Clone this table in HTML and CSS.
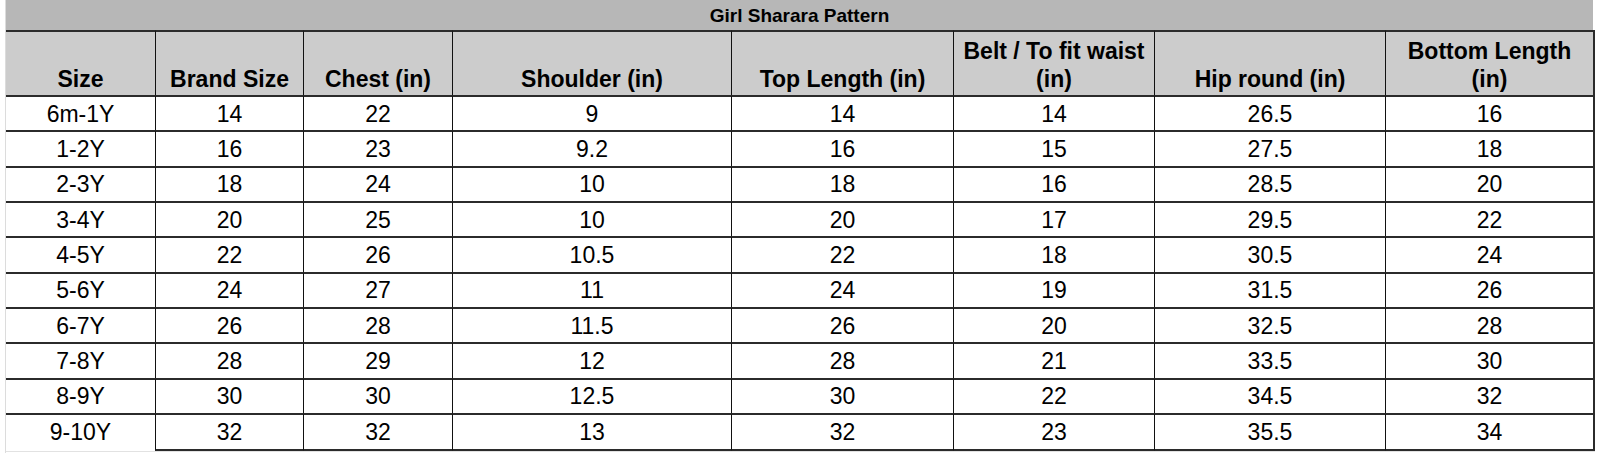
FILE: index.html
```html
<!DOCTYPE html>
<html>
<head>
<meta charset="utf-8">
<link rel="stylesheet" href="styles.css">
</head>
<body>
<div class="sheet">
  <div class="grid">
    <div class="title">Girl Sharara Pattern</div>

    <div class="h first"><span>Size</span></div>
    <div class="h"><span>Brand Size</span></div>
    <div class="h"><span>Chest (in)</span></div>
    <div class="h"><span>Shoulder (in)</span></div>
    <div class="h"><span>Top Length (in)</span></div>
    <div class="h"><span>Belt / To fit waist (in)</span></div>
    <div class="h"><span>Hip round (in)</span></div>
    <div class="h last"><span>Bottom Length (in)</span></div>

    <div class="c first">6m-1Y</div><div class="c">14</div><div class="c">22</div><div class="c">9</div><div class="c">14</div><div class="c">14</div><div class="c">26.5</div><div class="c last">16</div>
    <div class="c first">1-2Y</div><div class="c">16</div><div class="c">23</div><div class="c">9.2</div><div class="c">16</div><div class="c">15</div><div class="c">27.5</div><div class="c last">18</div>
    <div class="c first">2-3Y</div><div class="c">18</div><div class="c">24</div><div class="c">10</div><div class="c">18</div><div class="c">16</div><div class="c">28.5</div><div class="c last">20</div>
    <div class="c first">3-4Y</div><div class="c">20</div><div class="c">25</div><div class="c">10</div><div class="c">20</div><div class="c">17</div><div class="c">29.5</div><div class="c last">22</div>
    <div class="c first">4-5Y</div><div class="c">22</div><div class="c">26</div><div class="c">10.5</div><div class="c">22</div><div class="c">18</div><div class="c">30.5</div><div class="c last">24</div>
    <div class="c first">5-6Y</div><div class="c">24</div><div class="c">27</div><div class="c">11</div><div class="c">24</div><div class="c">19</div><div class="c">31.5</div><div class="c last">26</div>
    <div class="c first">6-7Y</div><div class="c">26</div><div class="c">28</div><div class="c">11.5</div><div class="c">26</div><div class="c">20</div><div class="c">32.5</div><div class="c last">28</div>
    <div class="c first">7-8Y</div><div class="c">28</div><div class="c">29</div><div class="c">12</div><div class="c">28</div><div class="c">21</div><div class="c">33.5</div><div class="c last">30</div>
    <div class="c first">8-9Y</div><div class="c">30</div><div class="c">30</div><div class="c">12.5</div><div class="c">30</div><div class="c">22</div><div class="c">34.5</div><div class="c last">32</div>
    <div class="c first end">9-10Y</div><div class="c end">32</div><div class="c end">32</div><div class="c end">13</div><div class="c end">32</div><div class="c end">23</div><div class="c end">35.5</div><div class="c last end">34</div>
  </div>
</div>
</body>
</html>
```
FILE: styles.css
```css
* { box-sizing: border-box; }
html, body { margin: 0; padding: 0; background: #fff; }
body { font-family: "Liberation Sans", Arial, sans-serif; color: #000; }

.sheet {
  margin-left: 5px;
  border-left: 1px solid #dcdcdc;
  height: 453px;
}

.grid {
  display: grid;
  grid-template-columns: 149px 148px 149px 279px 222px 201px 231px 210px;
  grid-template-rows: 30px 65px repeat(9, 35.33px) 38.33px;
  width: 1589px;
  border-bottom: 1px solid #e2e2e2;
}

.title {
  grid-column: 1 / -1;
  background: #b7b7b7;
  font-weight: bold;
  font-size: 19px;
  text-align: center;
  line-height: 30px;
  padding-top: 1px;
  margin-right: 2px;
}

.h {
  background: #cccccc;
  border-top: 2px solid #2b2b2b;
  border-left: 1px solid #111;
  font-weight: bold;
  font-size: 23px;
  line-height: 28px;
  text-align: center;
  display: flex;
  flex-direction: column;
  justify-content: flex-end;
  padding: 0 6px 2px;
}

.c {
  border-top: 2px solid #2b2b2b;
  border-left: 1px solid #111;
  font-size: 23px;
  text-align: center;
  display: flex;
  align-items: center;
  justify-content: center;
  padding-top: 1px;
}

.first { border-left: none; }
.last { border-right: 2px solid #2b2b2b; }
.end { border-bottom: 2px solid #2b2b2b; }
.first.end { border-bottom: 2px solid transparent; }
```
